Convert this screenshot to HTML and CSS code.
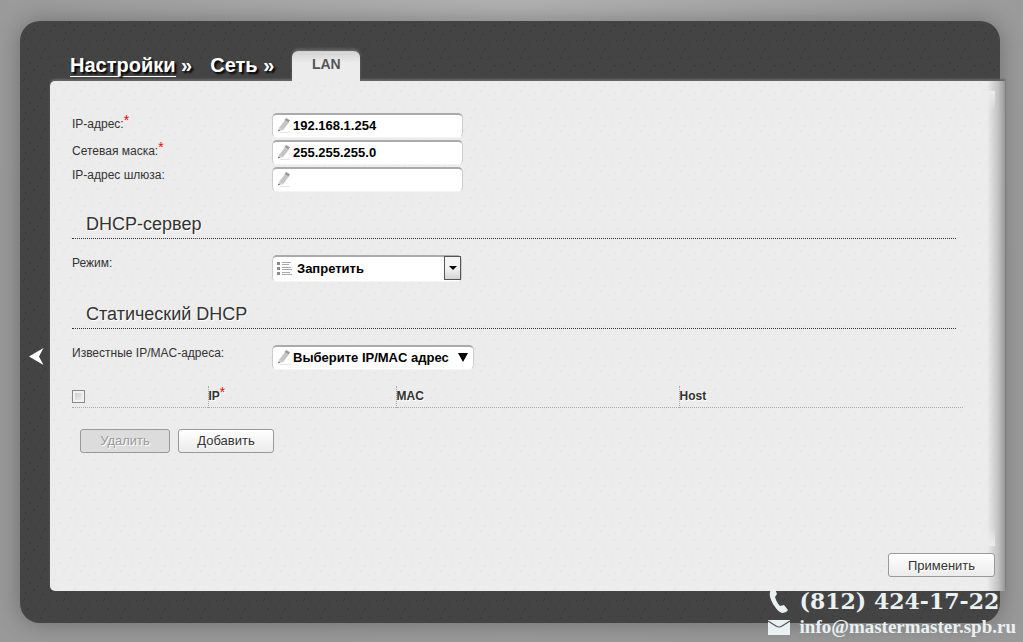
FILE: index.html
```html
<!DOCTYPE html>
<html lang="ru">
<head>
    <meta charset="UTF-8">
    <meta name="viewport" content="width=device-width, initial-scale=1.0">
    <title>Настройки - Сеть - LAN</title>
    <link rel="stylesheet" href="styles.css">
</head>
<body>
    <!-- Shared icons -->
    <svg class="sprite" aria-hidden="true">
        <symbol id="pencil" viewBox="0 0 14 16">
            <path d="M3 14.500h10" stroke="#e4e4e4"/>
            <path d="M1.500 13l1-4L8 2l4 2.500-6 7.700z" fill="#cdcdcd"/>
            <path d="M4 10l5-6.500M5.500 11l5-6.500" stroke="#b2b2b2" stroke-width=".7"/>
            <path d="M7.500 2L9 0l4 2.300-1.500 2.200z" fill="#999"/>
            <path d="M1 13.500l.5-2 1.700 1z" fill="#666"/>
        </symbol>
    </svg>

    <div class="shell">
        <button class="collapse" type="button" aria-label="Свернуть меню">
            <svg viewBox="0 0 15 17"><path d="M0 8.500L14.500 0 10 8.500l4.500 8.500z" fill="#fff"/></svg>
        </button>

        <nav class="crumbs">
            <a class="crumb" href="#"><span class="underlined">Настройки</span> »</a>
            <a class="crumb" href="#">Сеть »</a>
            <a class="tab" href="#">LAN</a>
        </nav>

        <form class="panel">
            <div class="row">
                <label class="required" for="ip">IP-адрес:<sup>*</sup></label>
                <div class="field">
                    <svg class="icon"><use href="#pencil"/></svg>
                    <input type="text" id="ip" value="192.168.1.254">
                </div>
            </div>
            <div class="row">
                <label class="required" for="mask">Сетевая маска:<sup>*</sup></label>
                <div class="field">
                    <svg class="icon"><use href="#pencil"/></svg>
                    <input type="text" id="mask" value="255.255.255.0">
                </div>
            </div>
            <div class="row">
                <label for="gateway">IP-адрес шлюза:</label>
                <div class="field">
                    <svg class="icon"><use href="#pencil"/></svg>
                    <input type="text" id="gateway">
                </div>
            </div>

            <h2>DHCP-сервер</h2>
            <div class="row">
                <label for="mode">Режим:</label>
                <div class="field">
                    <svg class="icon list" viewBox="0 0 16 14">
                        <path d="M0 0h3v3H0zM0 5h3v3H0zM0 10h3v3H0z" fill="#8a8a8a"/>
                        <path d="M5 .5h9M5 2.500h7M5 5.500h9M5 7.500h10M5 10.500h8M5 12.500h10" stroke="#a8a8a8"/>
                    </svg>
                    <select id="mode">
                        <option>Запретить</option>
                    </select>
                    <span class="arrow"></span>
                </div>
            </div>

            <h2>Статический DHCP</h2>
            <div class="row">
                <label for="known">Известные IP/MAC-адреса:</label>
                <div class="field">
                    <svg class="icon"><use href="#pencil"/></svg>
                    <button class="known" type="button" id="known">Выберите IP/MAC адрес <svg viewBox="0 0 10 9"><path d="M0 0h10L5 9z"/></svg></button>
                </div>
            </div>

            <table>
                <thead>
                    <tr>
                        <th class="check"><input type="checkbox" aria-label="Выбрать все"></th>
                        <th class="ip">IP<sup>*</sup></th>
                        <th class="mac">MAC</th>
                        <th>Host</th>
                    </tr>
                </thead>
            </table>

            <div class="actions">
                <button class="btn delete" type="button" disabled>Удалить</button>
                <button class="btn add" type="button">Добавить</button>
            </div>

            <div class="submit">
                <button class="btn apply" type="button">Применить</button>
            </div>
        </form>
    </div>

    <!-- Contacts -->
    <div class="contacts">
        <div class="contact phone">
            <svg viewBox="0 0 22 25"><path d="M4 0C1 2 1 7 4 13c3 6 7 10 10 11 2 0 5-1 6-3l-4-5-4 1C9 14 8 11 7 8l2-3-2-5z" fill="#e9f1f3"/></svg>
            <span>(812) 424-17-22</span>
        </div>
        <div class="contact mail">
            <svg viewBox="0 0 22 15"><path d="M0 0h22v15H0z" fill="#e9f1f3"/><path d="M0 1l8 5q3 2 6 0l8-5" fill="none" stroke="#555" stroke-width="1.200"/></svg>
            <span>info@mastermaster.spb.ru</span>
        </div>
    </div>
</body>
</html>
```
FILE: styles.css
```css
* {
    box-sizing: border-box;
}

body {
    display: flex;
    min-height: 100vh;
    margin: 0;
    padding: 21px 23px 19px 20px;
    position: relative;
    overflow-x: hidden;
    font-family: "Liberation Sans", Arial, sans-serif;
    font-size: 12px;
    line-height: 16px;
    color: #333;
    background: radial-gradient(ellipse at 50% 0, #b2b2b2, #999 75%);
}

button,
input,
select {
    font-family: inherit;
    color: #000;
}

.sprite {
    position: absolute;
    width: 0;
    height: 0;
}

.shell {
    display: flex;
    flex: 1;
    flex-direction: column;
    min-width: 0;
    padding: 0 0 32px 30px;
    position: relative;
    border-radius: 20px;
    background-color: #444;
    background-image: url("data:image/svg+xml,%3Csvg xmlns='http://www.w3.org/2000/svg' width='40' height='40'%3E%3Cpath d='M2 4h1M9 2h2M17 6h1M25 3h1M34 5h2M5 12h1M13 10l2-2M22 13h1M30 11l2-2M38 14h1M3 20l2-2M11 21h1M19 19h2M28 22h1M36 20h1M7 28h2M15 27h1M23 30l3-3M33 29h1M2 36h1M12 35h1M20 37h2M29 36h1M37 35h1' stroke='%23363636'/%3E%3C/svg%3E");
    box-shadow: 0 0 24px rgba(0, 0, 0, 0.3);
}

.collapse {
    position: absolute;
    left: 9px;
    top: 50%;
    width: 15px;
    height: 17px;
    margin-top: 26px;
    padding: 0;
    border: 0;
    background: none;
    cursor: pointer;
}

.collapse svg {
    display: block;
}

/* Breadcrumbs and tab */
.crumbs {
    display: flex;
    align-items: flex-end;
    height: 60px;
    padding-left: 20px;
    position: relative;
    z-index: 1;
}

.crumb {
    margin-right: 18px;
    padding-bottom: 4px;
    font-size: 20px;
    font-weight: bold;
    line-height: 24px;
    color: #fff;
    text-decoration: none;
    text-shadow: 2px 2px 2px #000;
}

.underlined {
    border-bottom: 1px solid #fff;
}

.tab {
    width: 68px;
    height: 30px;
    border-radius: 6px 6px 0 0;
    font-size: 14px;
    font-weight: bold;
    line-height: 27px;
    text-align: center;
    color: #555;
    text-decoration: none;
    background: linear-gradient(#d2d2d2, #ececec 12px);
    box-shadow: 0 -2px 3px rgba(255, 255, 255, 0.2);
}

/* Main panel, slightly wider than the shell */
.panel {
    display: flex;
    flex: 1;
    flex-direction: column;
    margin-right: -5px;
    padding: 32px 10px 14px 22px;
    position: relative;
    border-radius: 5px 0 0 5px;
    background-color: #ececec;
    background-image: url("data:image/svg+xml,%3Csvg xmlns='http://www.w3.org/2000/svg' width='40' height='40'%3E%3Cpath d='M2 4h1M9 2h2M17 6h1M25 3h1M34 5h2M5 12h1M13 10l2-2M22 13h1M30 11l2-2M38 14h1M3 20l2-2M11 21h1M19 19h2M28 22h1M36 20h1M7 28h2M15 27h1M23 30l3-3M33 29h1M2 36h1M12 35h1M20 37h2M29 36h1M37 35h1' stroke='%23e0e0e0'/%3E%3C/svg%3E");
    box-shadow: 0 -2px 2px #666;
}

.panel::before,
.panel::after {
    content: "";
    position: absolute;
    pointer-events: none;
}

.panel::before {
    top: 0;
    right: 0;
    bottom: 0;
    width: 18px;
    background: linear-gradient(90deg, rgba(160, 160, 160, 0), #c4c4c4 60%, #989898);
}

.panel::after {
    top: 10px;
    right: 10px;
    bottom: 45px;
    width: 8px;
    background: linear-gradient(#ececec, rgba(236, 236, 236, 0) 20px, rgba(236, 236, 236, 0) calc(100% - 20px), #ececec);
}

.row {
    display: flex;
    align-items: flex-start;
    margin-bottom: 2px;
}

.row label {
    width: 200px;
}

.row .required {
    padding-top: 3px;
}

sup {
    font-size: 14px;
    font-weight: normal;
    line-height: 8px;
    vertical-align: 3px;
    color: #f00;
}

.field {
    position: relative;
}

.field input,
.field select,
.known {
    display: block;
    width: 191px;
    height: 25px;
    padding: 0 0 2px 20px;
    border: 1px solid #ccc;
    border-top: 2px solid #aaa;
    border-bottom-color: #f4f4f4;
    border-radius: 5px;
    font-size: 13px;
    font-weight: bold;
    background: #fff;
}

.field .icon {
    position: absolute;
    left: 5px;
    top: 5px;
    width: 14px;
    height: 16px;
}

.field .list {
    top: 7px;
    width: 16px;
    height: 14px;
}

.field select {
    width: 190px;
    height: 27px;
    padding-left: 24px;
    appearance: none;
}

.arrow {
    display: flex;
    align-items: center;
    justify-content: center;
    position: absolute;
    right: 1px;
    top: 1px;
    width: 17px;
    height: 24px;
    border: 1px solid #555;
    background: linear-gradient(#f4f4f4 50%, #d4d4d4);
    pointer-events: none;
}

.arrow::before {
    content: "";
    border: 4px solid transparent;
    border-top-color: #000;
    border-bottom: 0;
}

.field .known {
    width: auto;
    padding-right: 5px;
    text-align: left;
}

.known svg {
    width: 10px;
    height: 9px;
    margin-left: 6px;
}

h2 {
    margin: 16px 39px 16px 0;
    padding: 3px 14px;
    border-bottom: 1px dotted #333;
    font-size: 18px;
    font-weight: normal;
    line-height: 22px;
    text-shadow: 1px 1px 0 #fff;
}

/* Static DHCP table */
table {
    width: calc(100% - 32px);
    margin-top: 14px;
    table-layout: fixed;
    border-collapse: collapse;
    border-bottom: 1px dotted #aaa;
}

th {
    height: 21px;
    padding: 0;
    border-left: 1px dotted #aaa;
    text-align: left;
    text-shadow: 1px 1px 0 #fff;
}

.check {
    width: 136px;
    border-left: 0;
}

.ip {
    width: 188px;
}

.mac {
    width: 283px;
}

.check input {
    display: block;
    width: 13px;
    height: 13px;
    margin: 0;
    appearance: none;
    border: 1px solid #8a8a8a;
    background: linear-gradient(135deg, #c4c8cc, #f6f6f6);
    box-shadow: inset 0 0 0 2px #f2f2f2;
}

/* Buttons */
.actions {
    display: flex;
    gap: 8px;
    margin: 21px 0 0 8px;
}

.btn {
    height: 24px;
    padding: 0;
    border: 1px solid #999;
    border-radius: 3px;
    font-size: 13px;
    color: #333;
    text-shadow: 1px 1px 0 #fff;
    background: linear-gradient(#fff, #ebebeb);
}

.btn:disabled {
    color: #999;
    background: #dcdcdc;
}

.delete {
    width: 90px;
}

.add {
    width: 96px;
}

.apply {
    width: 107px;
}

.submit {
    margin-top: auto;
    padding-top: 20px;
    text-align: right;
}

.submit .btn {
    position: relative;
}

/* Contacts over the corner */
.contacts {
    position: absolute;
    right: 7px;
    bottom: 4px;
    font-family: Georgia, "DejaVu Serif", serif;
    font-weight: bold;
    color: #e9f1f3;
}

.contact {
    display: flex;
    align-items: center;
    gap: 10px;
}

.contact svg {
    width: 22px;
    height: 15px;
}

.phone {
    height: 30px;
    font-size: 22px;
}

.phone svg {
    height: 25px;
}

.mail {
    height: 22px;
    font-family: Georgia, "Liberation Serif", serif;
    font-size: 19px;
}
```
